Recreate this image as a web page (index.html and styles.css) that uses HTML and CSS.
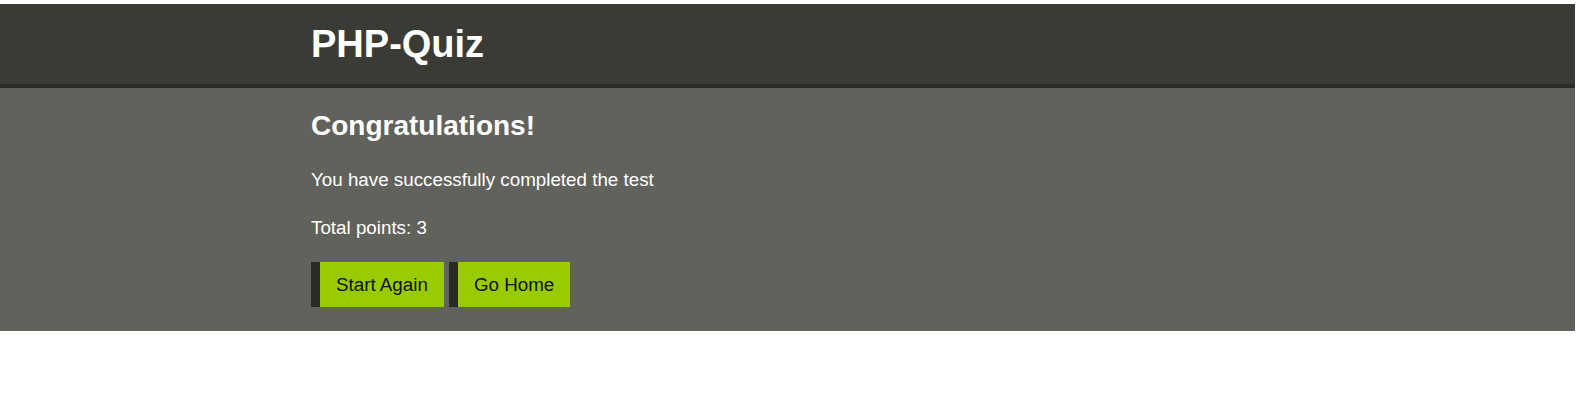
FILE: index.html
```html
<!DOCTYPE html>
<html lang="en">
<head>
<meta charset="utf-8">
<title>PHP-Quiz</title>
<link rel="stylesheet" href="styles.css">
</head>
<body>
<div class="page">
  <header class="site-header">
    <div class="container">
      <h1 class="logo">PHP-Quiz</h1>
    </div>
  </header>
  <main class="result">
    <div class="container">
      <h2 class="result-title">Congratulations!</h2>
      <p class="result-text">You have successfully completed the test</p>
      <p class="result-text">Total points: 3</p>
      <div class="actions">
        <a class="btn" href="#">Start Again</a>
        <a class="btn" href="#">Go Home</a>
      </div>
    </div>
  </main>
</div>
</body>
</html>
```
FILE: styles.css
```css
html, body {
  margin: 0;
  padding: 0;
  background: #ffffff;
}
body {
  font-family: "Liberation Sans", Arial, sans-serif;
  font-size: 18.8px;
  color: #ffffff;
}
.page {
  margin: 4px 5px 0 0;
}
.container {
  width: 953px;
  margin: 0 auto;
}
.site-header {
  background: #3b3b36;
  height: 80px;
  border-bottom: 4px solid #2a2a27;
}
.logo {
  margin: 0;
  font-size: 38px;
  font-weight: bold;
  line-height: 80px;
  color: #ffffff;
}
.result {
  background: #62625d;
  padding: 22px 0 24px;
}
.result-title {
  margin: 0 0 27px;
  font-size: 28px;
  font-weight: bold;
}
.result-text {
  margin: 0 0 26px;
}
.result-text + .result-text {
  margin-bottom: 23px;
}
.actions {
  display: flex;
  gap: 5px;
}
.btn {
  display: block;
  height: 45px;
  line-height: 45px;
  padding: 0 16px;
  background: #99cc00;
  border-left: 9px solid #2a2a27;
  color: #111111;
  text-decoration: none;
}
```
